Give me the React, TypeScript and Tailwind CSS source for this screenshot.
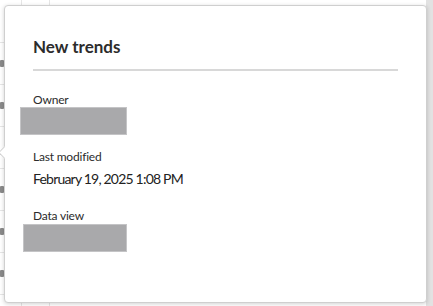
import React from "react";

function Row({ icon }: { icon: boolean }) {
  return (
    <div className="h-[42px] border-b border-[#e6e6e6] flex items-center">
      {icon && <div className="w-[4px] h-[7px] bg-[#8a8a8a] rounded-[1px]" />}
    </div>
  );
}

export default function App() {
  return (
    <div className="relative w-[433px] h-[306px] overflow-hidden bg-white" style={{ fontFamily: "Lato, 'Open Sans', sans-serif" }}>
      {/* background page */}
      <div className="flex flex-col h-full">
        <div className="h-[5px] flex bg-[#e4e4e4]">
          <div className="w-[30px] bg-[#f4f4f4]" />
          <div className="w-[10px] bg-[#ececec]" />
          <div className="w-[9px] bg-[#7c7c7c]" />
          <div className="w-[4px] bg-[#fafafa]" />
          <div className="flex-1 bg-[#e3e3e3]" />
        </div>
        <div className="flex flex-1">
          <div className="w-[22px] border-r border-[#e6e6e6] pt-[6px]">
            <div className="h-[37px] border-b border-[#e6e6e6]" />
            {[true, true, false, true, true, true, false].map((v, i) => (
              <Row key={i} icon={v} />
            ))}
          </div>
          <div className="w-[28px] border-r border-[#e6e6e6]" />
          <div className="flex-1" />
          <div className="w-[7px] bg-[#e2e2e2]" />
        </div>
      </div>

      {/* popover */}
      <div className="absolute left-[4px] top-[5px] w-[423px] h-[298px] bg-white border border-[#cfcfcf] rounded-[4px] shadow-[0_1px_4px_rgba(0,0,0,0.18)]">
        {/* arrow */}
        <div className="absolute left-[-5px] top-[142px] w-[9px] h-[9px] bg-white border-l border-b border-[#cfcfcf] rotate-45" />
        <div className="relative pl-[28px] pr-[28px] pt-[29px]">
          <div className="text-[17px] leading-[24px] font-bold text-[#2c2c2c]">New trends</div>
          <div className="mt-[10px] h-[2px] bg-[#d8d8d8]" />
          <div className="mt-[22px] text-[12px] leading-[14px] text-[#2c2c2c] tracking-[-0.2px]">Owner</div>
          <div className="mt-[0px] ml-[-13px] w-[107px] h-[28px] bg-[#a9a9ab] border border-[#c4c4c6]" />
          <div className="mt-[15px] text-[12px] leading-[14px] text-[#2c2c2c] tracking-[-0.2px]">Last modified</div>
          <div className="mt-[6px] text-[14px] leading-[18px] text-[#222] tracking-[-0.8px]">February 19, 2025 1:08 PM</div>
          <div className="mt-[21px] text-[12px] leading-[14px] text-[#2c2c2c] tracking-[-0.2px]">Data view</div>
          <div className="mt-[1px] ml-[-10px] w-[104px] h-[28px] bg-[#a9a9ab] border border-[#c4c4c6]" />
        </div>
      </div>
    </div>
  );
}
